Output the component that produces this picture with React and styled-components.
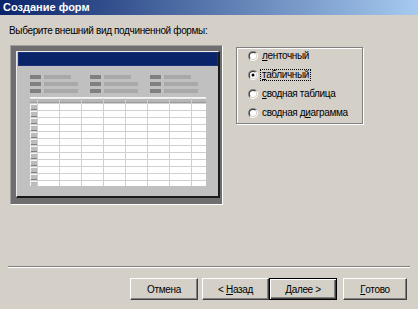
import React, { useId } from 'react';
import styled, { createGlobalStyle } from 'styled-components';

const Global = createGlobalStyle`
  html, body { margin: 0; padding: 0; background: #d4d0c8; }
  body { font-family: "Liberation Sans", Arial, sans-serif; }
`;

const Window = styled.div`
  width: 418px;
  height: 309px;
  background: #d4d0c8;
  display: flex;
  flex-direction: column;
  overflow: hidden;
  font-family: "Liberation Sans", Arial, sans-serif;
  font-size: 10px;
  letter-spacing: -0.35px;
  color: #000;
`;

const TitleBar = styled.div`
  flex: none;
  height: 15px;
  line-height: 14px;
  padding-left: 3px;
  background: linear-gradient(to right, #0a246a 0%, #a6caf0 100%);
  color: #fff;
  font-weight: bold;
  font-size: 11px;
  letter-spacing: 0;
`;

const Body = styled.div`
  flex: 1;
  padding: 0 9px;
`;

const Prompt = styled.div`
  margin-top: 10px;
  line-height: 12px;
  height: 12px;
`;

const MainRow = styled.div`
  display: flex;
  align-items: flex-start;
  margin-top: 8px;
`;

const PreviewFrame = styled.div`
  box-sizing: border-box;
  width: 213px;
  height: 160px;
  margin-left: 1px;
  border: 1px solid;
  border-color: #a0a0a0 #ffffff #ffffff #a0a0a0;
  background: #6f6f6f;
  padding: 5px 2px 6px 5px;
  display: flex;
`;

const MiniForm = styled.div`
  box-sizing: border-box;
  flex: 1;
  background: #c0c0c0;
  border-top: 1px solid #ececec;
  border-left: 1px solid #ececec;
  border-right: 2px solid #1a1a1a;
  border-bottom: 2px solid #1a1a1a;
  display: flex;
  flex-direction: column;
`;

const MiniTitle = styled.div`
  height: 14px;
  margin-left: 1px;
  background: #0a246a;
  box-shadow: inset 0 0 0 1px #1c3276;
`;

const FieldColumns = styled.div`
  display: flex;
  margin-top: 9px;
  padding-left: 13px;
`;

const FieldColumn = styled.div`
  width: 60px;
  display: flex;
  flex-direction: column;
  gap: 3px;
`;

const FieldRow = styled.div`
  display: flex;
  gap: 3px;
  height: 4px;
`;

const FieldSwatch = styled.div`
  width: 11px;
  background: #808080;
`;

const FieldBar = styled.div`
  width: ${(p) => p.$w}px;
  background: #a9a9a9;
`;

const MiniGrid = styled.div`
  display: grid;
  grid-template-columns: 7px repeat(7, 21px) 14px;
  grid-template-rows: 5px;
  grid-auto-rows: 6px;
  gap: 1px;
  width: 176px;
  height: 88px;
  overflow: hidden;
  margin: 5px 0 0 13px;
  background: #d0d0d0;
  box-shadow: 0 -1px #f4f4f4;
`;

const HeaderCell = styled.div`
  background: #b6b6b6;
  box-shadow: inset 0 1px #ececec, inset 0 -1px #9a9a9a;
`;

const RowHeader = styled.div`
  background: #bcbcbc;
  box-shadow: inset 1px 1px #f4f4f4, inset 0 -1px #808080;
`;

const Cell = styled.div`
  background: #ffffff;
`;

const GroupBox = styled.div`
  box-sizing: border-box;
  width: 127px;
  height: 77px;
  margin: 2px 0 0 13px;
  border: 1px solid #808080;
  box-shadow: inset 1px 1px #ffffff, 1px 1px #ffffff;
  padding: 2px 0 0 11px;
  display: flex;
  flex-direction: column;
  gap: 7px;
`;

const RadioRow = styled.div`
  display: flex;
  align-items: center;
  height: 12px;
`;

const RadioLabel = styled.span`
  margin-left: 2px;
  padding: 0 1px;
  line-height: 10px;
  border: 1px dotted ${(p) => (p.$focused ? '#000' : 'transparent')};
  white-space: nowrap;
`;

const U = styled.span`
  text-decoration: underline;
`;

const Footer = styled.div`
  flex: none;
`;

const Separator = styled.div`
  margin: 0 8px;
  height: 0;
  border-top: 1px solid #808080;
  border-bottom: 1px solid #ffffff;
`;

const ButtonRow = styled.div`
  display: flex;
  justify-content: flex-end;
  padding: 10px 11px 9px 0;
`;

const Button = styled.div`
  box-sizing: border-box;
  width: ${(p) => p.$w}px;
  height: 22px;
  margin-left: ${(p) => p.$gap || 0}px;
  display: flex;
  align-items: center;
  justify-content: center;
  background: #d4d0c8;
  border: 1px solid;
  border-color: ${(p) => (p.$default ? '#000 #000 #000 #000' : '#ffffff #404040 #404040 #ffffff')};
  box-shadow: ${(p) =>
    p.$default
      ? 'inset 1px 1px #ffffff, inset -1px -1px #404040, inset -2px -2px #808080'
      : 'inset -1px -1px #808080'};
  font-size: 10px;
  white-space: nowrap;
`;

function RadioCircle({ checked }) {
  const id = useId().replace(/[^a-zA-Z0-9]/g, '');
  return (
    <svg width="10" height="10" viewBox="0 0 10 10" style={{ flex: 'none' }}>
      <defs>
        <linearGradient id={`${id}o`} x1="0" y1="0" x2="1" y2="1">
          <stop offset="0.5" stopColor="#808080" />
          <stop offset="0.5" stopColor="#ffffff" />
        </linearGradient>
        <linearGradient id={`${id}i`} x1="0" y1="0" x2="1" y2="1">
          <stop offset="0.5" stopColor="#404040" />
          <stop offset="0.5" stopColor="#d4d0c8" />
        </linearGradient>
      </defs>
      <circle cx="5" cy="5" r="5" fill={`url(#${id}o)`} />
      <circle cx="5" cy="5" r="4" fill={`url(#${id}i)`} />
      <circle cx="5" cy="5" r="3.1" fill="#ffffff" />
      {checked && <circle cx="5" cy="5" r="1.5" fill="#000" />}
    </svg>
  );
}

const fieldColumns = [
  [27, 34, 34],
  [27, 34, 34],
  [27, 34, 34],
];

const GRID_COLS = 9;
const GRID_ROWS = 13;

function PreviewGrid() {
  const cells = [];
  for (let r = 0; r < GRID_ROWS; r++) {
    for (let c = 0; c < GRID_COLS; c++) {
      const key = `${r}-${c}`;
      if (r === 0) cells.push(<HeaderCell key={key} />);
      else if (c === 0) cells.push(<RowHeader key={key} />);
      else cells.push(<Cell key={key} />);
    }
  }
  return <MiniGrid>{cells}</MiniGrid>;
}

const options = [
  { pre: '', u: 'л', post: 'енточный' },
  { pre: '', u: 'т', post: 'абличный', checked: true },
  { pre: '', u: 'с', post: 'водная таблица' },
  { pre: 'сводная д', u: 'и', post: 'аграмма' },
];

export default function App() {
  return (
    <>
      <Global />
      <Window>
        <TitleBar>Создание форм</TitleBar>
        <Body>
          <Prompt>Выберите внешний вид подчиненной формы:</Prompt>
          <MainRow>
            <PreviewFrame>
              <MiniForm>
                <MiniTitle />
                <FieldColumns>
                  {fieldColumns.map((col, i) => (
                    <FieldColumn key={i}>
                      {col.map((w, j) => (
                        <FieldRow key={j}>
                          <FieldSwatch />
                          <FieldBar $w={w} />
                        </FieldRow>
                      ))}
                    </FieldColumn>
                  ))}
                </FieldColumns>
                <PreviewGrid />
              </MiniForm>
            </PreviewFrame>
            <GroupBox>
              {options.map((o, i) => (
                <RadioRow key={i}>
                  <RadioCircle checked={o.checked} />
                  <RadioLabel $focused={o.checked}>
                    {o.pre}
                    <U>{o.u}</U>
                    {o.post}
                  </RadioLabel>
                </RadioRow>
              ))}
            </GroupBox>
          </MainRow>
        </Body>
        <Footer>
          <Separator />
          <ButtonRow>
            <Button $w={68}>Отмена</Button>
            <Button $w={67} $gap={4}>
              &lt;&nbsp;<U>Н</U>азад
            </Button>
            <Button $w={68} $default>
              <U>Д</U>алее&nbsp;&gt;
            </Button>
            <Button $w={64} $gap={6}>
              <U>Г</U>отово
            </Button>
          </ButtonRow>
        </Footer>
      </Window>
    </>
  );
}
